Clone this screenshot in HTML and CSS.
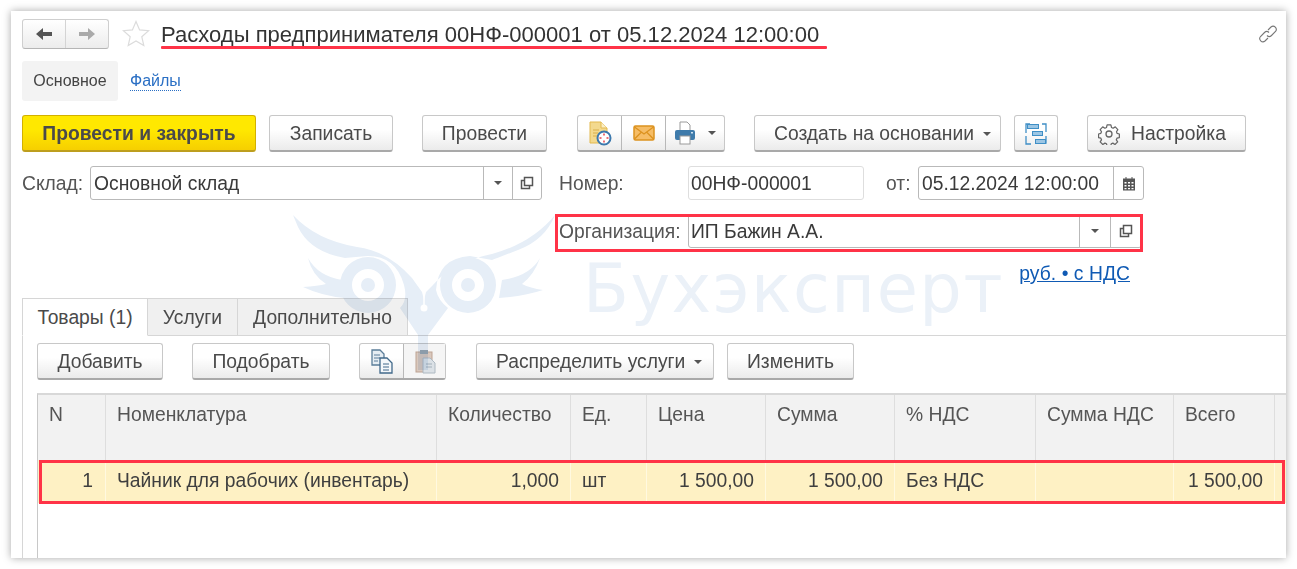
FILE: index.html
```html
<!DOCTYPE html>
<html lang="ru">
<head>
<meta charset="utf-8">
<title>Расходы предпринимателя</title>
<link rel="stylesheet" href="styles.css">
</head>
<body>
<main class="sheet">
  <header class="head">
    <div class="nav">
      <button class="nav-btn"><svg width="18" height="14" viewBox="0 0 18 14"><path class="arrow-on" d="M1 7l7-6v4h9v4H8v4z"/></svg></button>
      <button class="nav-btn nav-btn-last"><svg width="18" height="14" viewBox="0 0 18 14"><path class="arrow-off" d="M17 7l-7-6v4H1v4h9v4z"/></svg></button>
    </div>
    <svg class="star" width="28" height="27" viewBox="0 0 28 27"><path d="M14 1.500l3.600 8.400 9 .8-6.800 6 2 8.800-7.800-4.600-7.800 4.600 2-8.800-6.800-6 9-.8z"/></svg>
    <h1 class="title">Расходы предпринимателя 00НФ-000001 от 05.12.2024 12:00:00</h1>
    <svg class="chain" width="20" height="20" viewBox="0 0 20 20"><path d="M10 6l3-3a3.200 3.200 0 0 1 4.500 4.500l-4 4a3.200 3.200 0 0 1-4.500 0M10 14l-3 3a3.200 3.200 0 0 1-4.500-4.500l4-4a3.200 3.200 0 0 1 4.500 0"/></svg>
  </header>

  <nav class="pages">
    <span class="page page-active">Основное</span>
    <a class="page-link">Файлы</a>
  </nav>

  <div class="commands">
    <button class="btn btn-primary w-post-close">Провести и закрыть</button>
    <button class="btn w-save gap-s">Записать</button>
    <button class="btn w-post gap-l">Провести</button>
    <div class="group w-group-a gap-w">
      <button class="cell cell-44"><svg width="24" height="25" viewBox="0 0 24 25"><path d="M2 1h11l6 6v15H2z" fill="#f3d98e" stroke="#e3b94f"/><path d="M13 1v6h6" fill="#fbeec4" stroke="#e3b94f"/><path d="M5 9h6M5 12h5M5 15h4" stroke="#d9ae4a"/><circle cx="16" cy="17" r="6.500" fill="#fff" stroke="#3b78ad" stroke-width="2"/><path d="M16 12.500v2M16 19.500v2M11.500 17h2M18.500 17h2" stroke="#e8404a" stroke-width="1.500"/></svg></button>
      <button class="cell cell-44"><svg width="22" height="16" viewBox="0 0 22 16"><rect x="1" y="1" width="20" height="14" rx="1.500" fill="#f6bd66" stroke="#dc921f" stroke-width="1.500"/><path d="M1.500 2l9.500 7 9.500-7M1.500 14l6.500-6.500M20.500 14L14 7.500" fill="none" stroke="#dc921f" stroke-width="1.300"/></svg></button>
      <button class="cell cell-rest"><svg width="22" height="24" viewBox="0 0 22 24"><path d="M6 11V1h7l3 3v7" fill="#fff" stroke="#9a9a9a"/><rect x="1" y="9" width="20" height="10" rx="2" fill="#3f7bab"/><rect x="6" y="15" width="10" height="8" fill="#fff" stroke="#9a9a9a"/><rect x="17" y="11" width="2" height="1.500" fill="#cfe2f0"/></svg><i class="caret caret-gap"></i></button>
    </div>
    <button class="btn btn-left w-create gap-l">Создать на основании<i class="caret caret-gap-wide"></i></button>
    <button class="btn w-icon gap-s"><svg width="24" height="24" viewBox="0 0 24 24"><path d="M6 2H2v9M18 2h4v8M2 14v8h5M22 14v7h-4" fill="none" stroke="#3f8fc6" stroke-width="1.300"/><rect x="3.500" y="2.500" width="11" height="4" fill="#9cc6e4" stroke="#3f8fc6"/><rect x="8.500" y="9.500" width="10" height="4" fill="#9cc6e4" stroke="#3f8fc6"/><rect x="11.500" y="17.500" width="10" height="4" fill="#9cc6e4" stroke="#3f8fc6"/></svg></button>
    <button class="btn btn-settings w-settings gap-l"><svg class="gear" width="22" height="22" viewBox="0 0 22 22"><path d="M9 1.500h4l.6 2.600 1.700.8 2.300-1.400 2.700 2.900-1.400 2.200.6 1.700 2.400.7v3.800l-2.500.6-.7 1.700 1.400 2.200-2.800 2.700-2.200-1.400-1.700.7-.6 2.500H9l-.6-2.500-1.700-.7-2.200 1.400-2.800-2.700 1.400-2.200-.7-1.700-2.400-.6v-3.800l2.400-.7.700-1.700-1.400-2.200 2.700-2.900 2.300 1.400 1.700-.8z" transform="translate(.55 .55) scale(.95)" stroke-linejoin="round"/><circle cx="11" cy="11" r="3"/></svg>Настройка</button>
  </div>

  <div class="fields">
    <label class="label w-label-a">Склад:</label>
    <div class="field w-store">
      <span class="value">Основной склад</span>
      <span class="field-btn"><i class="caret"></i></span>
      <span class="field-btn"><svg class="open" width="14" height="14" viewBox="0 0 14 14"><path d="M4.500 1.500h8v8h-8zM4.500 4.500h-3v8h8v-3"/></svg></span>
    </div>
    <label class="label w-label-b gap-m">Номер:</label>
    <div class="field field-soft w-number"><span class="value value-org">00НФ-000001</span></div>
    <label class="label w-label-c gap-n">от:</label>
    <div class="field w-date">
      <span class="value">05.12.2024 12:00:00</span>
      <span class="field-btn field-btn-date"><svg width="14" height="15" viewBox="0 0 14 15"><path fill="#555" d="M1 2.500h2.500V1h1v1.500h5V1h1v1.500H13v12H1z"/><path fill="#fff" d="M2.500 6h2v1.500h-2zM6 6h2v1.500H6zM9.500 6h2v1.500h-2zM2.500 9h2v1.500h-2zM6 9h2v1.500H6zM9.500 9h2v1.500h-2zM2.500 12h2v1.300h-2zM6 12h2v1.300H6zM9.500 12h2v1.300h-2z"/></svg></span>
    </div>
  </div>

  <div class="fields fields-org">
    <label class="label w-label-b">Организация:</label>
    <div class="field w-org">
      <span class="value value-org">ИП Бажин А.А.</span>
      <span class="field-btn field-btn-wide"><i class="caret"></i></span>
      <span class="field-btn field-btn-wide"><svg class="open" width="14" height="14" viewBox="0 0 14 14"><path d="M4.500 1.500h8v8h-8zM4.500 4.500h-3v8h8v-3"/></svg></span>
    </div>
  </div>

  <div class="currency"><a class="currency-link">руб. • с НДС</a></div>

  <div class="tabs">
    <span class="tab tab-active w-tab-a">Товары (1)</span>
    <span class="tab w-tab-b">Услуги</span>
    <span class="tab w-tab-c">Дополнительно</span>
  </div>

  <section class="panel">
    <div class="toolbar">
      <button class="btn w-add">Добавить</button>
      <button class="btn w-pick gap-l">Подобрать</button>
      <div class="group w-group-b gap-l">
        <button class="cell cell-44"><svg width="24" height="25" viewBox="0 0 24 25"><path d="M2 1h8l4 4v11H2z" fill="#e6edf3" stroke="#5b7d99" stroke-width="1.300"/><path d="M4 6h6M4 9h6M4 12h4" stroke="#5b7d99"/><path d="M10 9h7l5 5v10H10z" fill="#f4f7fa" stroke="#41698a" stroke-width="1.300"/><path d="M13 15h6M13 18h6M13 21h6" stroke="#41698a"/></svg></button>
        <button class="cell cell-rest cell-off"><svg width="22" height="25" viewBox="0 0 22 25"><rect x="2" y="3" width="16" height="20" fill="#d9c8bd" stroke="#bda393"/><rect x="6" y="1" width="8" height="4" fill="#9ba7b0"/><path d="M9 9h7l5 5v10H9z" fill="#dbe1e6" stroke="#aeb9c2"/><path d="M12 15h6M12 18h6" stroke="#a3b0ba"/></svg></button>
      </div>
      <button class="btn btn-left w-spread gap-w">Распределить услуги<i class="caret caret-gap-wide"></i></button>
      <button class="btn w-edit gap-s">Изменить</button>
    </div>

    <div class="grid grid-head">
      <span class="th">N</span>
      <span class="th">Номенклатура</span>
      <span class="th">Количество</span>
      <span class="th">Ед.</span>
      <span class="th">Цена</span>
      <span class="th">Сумма</span>
      <span class="th">% НДС</span>
      <span class="th">Сумма НДС</span>
      <span class="th">Всего</span>
      <span class="th"></span>
    </div>
    <div class="grid grid-row">
      <span class="td td-num td-n">1</span>
      <span class="td">Чайник для рабочих (инвентарь)</span>
      <span class="td td-num">1,000</span>
      <span class="td">шт</span>
      <span class="td td-num">1 500,00</span>
      <span class="td td-num">1 500,00</span>
      <span class="td">Без НДС</span>
      <span class="td"></span>
      <span class="td td-num">1 500,00</span>
      <span class="td"></span>
    </div>
  </section>

  <div class="watermark">
    <svg class="owl" width="285" height="165" viewBox="285 205 285 165">
      <path d="M293 215Q316 240 357 247Q388 251 412 278L422 292L424 300L426 292L433 285Q452 262 492 254Q532 243 555 215Q545 240 518 250Q500 257 492 260L470 256Q438 258 436 290Q438 300 448 308L428 335V375H418V335L400 308Q408 300 404 285Q396 256 368 256Q355 257 345 258Q310 252 298 227Z"/>
      <path d="M340 285a28 28 0 1 0 56 0a28 28 0 1 0-56 0zM352 285a16 16 0 1 1 32 0a16 16 0 1 1-32 0z" fill-rule="evenodd"/>
      <path d="M440 285a28 28 0 1 0 56 0a28 28 0 1 0-56 0zM452 285a16 16 0 1 1 32 0a16 16 0 1 1-32 0z" fill-rule="evenodd"/>
      <circle cx="368" cy="285" r="7"/><circle cx="468" cy="285" r="7"/>
      <path d="M308 258Q318 276 342 280L345 298Q322 296 303 287Q318 286 326 284Q312 275 308 258Z"/>
      <path d="M540 258Q530 276 502 280L499 298Q525 296 543 290Q530 288 522 284Q534 275 540 258Z"/>
      <path d="M424 285V306" stroke="#fff" stroke-width="1.500"/><circle cx="424" cy="308" r="3.500" fill="#fff"/>
    </svg>
    <span class="brand">Бухэксперт</span>
  </div>

  <span class="mark mark-title"></span>
  <span class="mark-box mark-org"></span>
  <span class="mark-box mark-row"></span>
</main>
</body>
</html>
```

FILE: styles.css
```css
* { box-sizing: border-box; }
html, body { margin: 0; height: 100%; background: #fff; overflow: hidden; }
body { padding: 11px; font-family: "Liberation Sans", Arial, sans-serif; font-size: 19.300px; color: #4a4a4a; }

.sheet { position: relative; width: 1275px; height: 547px; padding-left: 11px; background: #fff; box-shadow: 0 0 8px rgba(0, 0, 0, .35); overflow: hidden; }

button { font: inherit; color: inherit; padding: 0; margin: 0; }

/* header */
.head { display: flex; align-items: center; height: 29px; margin-top: 8px; }
.nav { display: flex; width: 87px; height: 30px; border: 1px solid #cfcfcf; border-bottom-color: #b5b5b5; border-radius: 3px; background: linear-gradient(#fff, #ececec); }
.nav-btn { flex: 1; display: flex; align-items: center; justify-content: center; border: 0; background: none; border-right: 1px solid #d4d4d4; }
.nav-btn-last { border-right: 0; }
.arrow-on { fill: #555; }
.arrow-off { fill: #aaa; }
.star { margin-left: 13px; flex: none; }
.star path { fill: #fff; stroke: #dcdcdc; stroke-width: 1.200; }
.title { margin: 0 0 0 11px; padding-top: 1px; font-size: 22.050px; font-weight: 400; color: #333; white-space: nowrap; line-height: 29px; }
.chain { margin-left: auto; margin-right: 8px; flex: none; }
.chain path { fill: none; stroke: #777; stroke-width: 1.100; }

/* pages */
.pages { display: flex; align-items: center; height: 40px; margin-top: 13px; font-size: 16px; }
.page { display: flex; align-items: center; justify-content: center; width: 96px; height: 40px; border-radius: 3px; }
.page-active { background: #f3f3f3; color: #444; }
.page-link { margin-left: 12px; color: #2a6fc4; border-bottom: 1px dotted #2a6fc4; line-height: 18px; }

/* buttons */
.commands { display: flex; height: 37px; margin-top: 14px; }
.toolbar { display: flex; height: 37px; margin-top: 7px; }
.btn { display: flex; align-items: center; justify-content: center; height: 37px; flex: none; padding-top: 1px; background: linear-gradient(#fff 40%, #ebebeb); border: 1px solid #c8c8c8; border-bottom: 2px solid #a9a9a9; border-radius: 3px; white-space: nowrap; }
.btn-primary { background: linear-gradient(#ffe800 40%, #f6cf00); border-color: #d2b000; border-bottom-color: #bd9e1e; font-weight: 700; color: #4a4a4a; }
.btn-left { justify-content: flex-start; padding-left: 19px; }
.btn-settings { justify-content: flex-start; padding-left: 10px; }
.gap-s { margin-left: 13px; }
.gap-l { margin-left: 29px; }
.gap-w { margin-left: 30px; }
.gap-m { margin-left: 17px; }
.gap-n { margin-left: 22px; }
.w-post-close { width: 234px; }
.w-save { width: 124px; }
.w-post { width: 125px; }
.w-group-a { width: 148px; }
.w-create { width: 247px; }
.w-icon { width: 44px; }
.w-settings { width: 159px; }
.w-add { width: 126px; }
.w-pick { width: 138px; }
.w-group-b { width: 87px; }
.w-spread { width: 238px; }
.w-edit { width: 127px; }
.group { display: flex; height: 37px; flex: none; border: 1px solid #c8c8c8; border-bottom: 2px solid #a9a9a9; border-radius: 3px; background: linear-gradient(#fff 40%, #ebebeb); }
.cell { display: flex; align-items: center; justify-content: center; border: 0; background: none; border-right: 1px solid #b8b8b8; height: 100%; }
.cell-44 { width: 44px; }
.cell-rest { flex: 1; border-right: 0; }
.cell-off { background: #f5f5f5; }
.caret { display: inline-block; width: 0; height: 0; border-left: 4px solid transparent; border-right: 4px solid transparent; border-top: 4px solid #555; flex: none; }
.caret-gap { margin-left: 12px; }
.caret-gap-wide { margin-left: 9px; }
.gear { margin-right: 11px; flex: none; }
.gear path, .gear circle { fill: none; stroke: #666; stroke-width: 1.300; }

/* fields */
.fields { display: flex; align-items: center; height: 34px; margin-top: 14px; }
.fields-org { padding-left: 537px; }
.label { flex: none; padding-top: 1px; color: #555; }
.w-label-a { width: 68px; }
.w-label-b { width: 129px; }
.w-label-c { width: 32px; }
.field { display: flex; height: 34px; flex: none; background: #fff; border: 1px solid #b9b9b9; border-radius: 3px; color: #3a3a3a; }
.field-soft { border-color: #dedede; }
.value { flex: 1; line-height: 34px; padding-left: 3px; white-space: nowrap; }
.value-org { padding-left: 2px; }
.field-btn { display: flex; align-items: center; justify-content: center; width: 29px; border-left: 1px solid #b9b9b9; flex: none; }
.field-btn-wide { width: 31px; }
.field-btn-date { width: 30px; }
.w-store { width: 452px; }
.w-number { width: 176px; }
.w-date { width: 226px; }
.w-org { width: 454px; }
.open { fill: none; stroke: #555; stroke-width: 1.500; }

.currency { display: flex; justify-content: flex-end; padding-right: 156px; height: 26px; margin-top: 12px; line-height: 28px; }
.currency-link { color: #0f5ab4; text-decoration: underline; letter-spacing: .05px; }

/* tabs */
.tabs { display: flex; height: 38px; margin-top: 12px; }
.tab { display: flex; align-items: center; justify-content: center; height: 38px; padding-top: 1px; background: #f0f0f0; border: 1px solid #d6d6d6; border-left: 0; color: #4a4a4a; }
.tab-active { background: #fff; border-left: 1px solid #d6d6d6; border-bottom-color: #fff; position: relative; z-index: 1; }
.w-tab-a { width: 126px; }
.w-tab-b { width: 90px; }
.w-tab-c { width: 170px; }

.panel { margin-top: -1px; height: 223px; border-left: 1px solid #d6d6d6; border-top: 1px solid #d6d6d6; padding-left: 14px; }

/* table */
.grid { display: grid; grid-template-columns: 68px 331px 134px 76px 119px 129px 141px 138px 101px 12px; }
.grid-head { margin-top: 13px; height: 67px; background: #f2f2f2; border-top: 2px solid #d8d8d8; border-left: 1px solid #c8c8c8; }
.grid-row { height: 43px; background: #fef1c4; border-left: 1px solid #c8c8c8; }
.panel::after { content: ""; display: block; width: 1px; height: 60px; background: #c8c8c8; }
.th { padding: 8px 0 0 11px; border-right: 1px solid #dedede; line-height: 24px; color: #555; white-space: nowrap; }
.td { padding-left: 11px; line-height: 42px; border-right: 1px solid #fff9e0; color: #3f3f3f; white-space: nowrap; }
.td-num { padding: 0 11px 0 0; text-align: right; }
.td-n { padding-right: 12px; }

/* watermark */
.watermark { position: absolute; left: 0; top: 0; width: 100%; height: 100%; mix-blend-mode: multiply; pointer-events: none; }
.owl { position: absolute; left: 274px; top: 194px; fill: #e6eef7; }
.brand { position: absolute; left: 572px; top: 238px; font-family: "DejaVu Sans", sans-serif; font-size: 67px; line-height: 80px; letter-spacing: 1.500px; color: #ebf1f8; }

/* red annotations */
.mark { position: absolute; background: #ff3347; }
.mark-title { left: 150px; top: 35px; width: 666px; height: 3px; border-radius: 1px; }
.mark-box { position: absolute; border: 3px solid #ff3347; }
.mark-org { left: 544px; top: 203px; width: 588px; height: 38px; }
.mark-row { left: 28px; top: 449px; width: 1246px; height: 44px; }
```
